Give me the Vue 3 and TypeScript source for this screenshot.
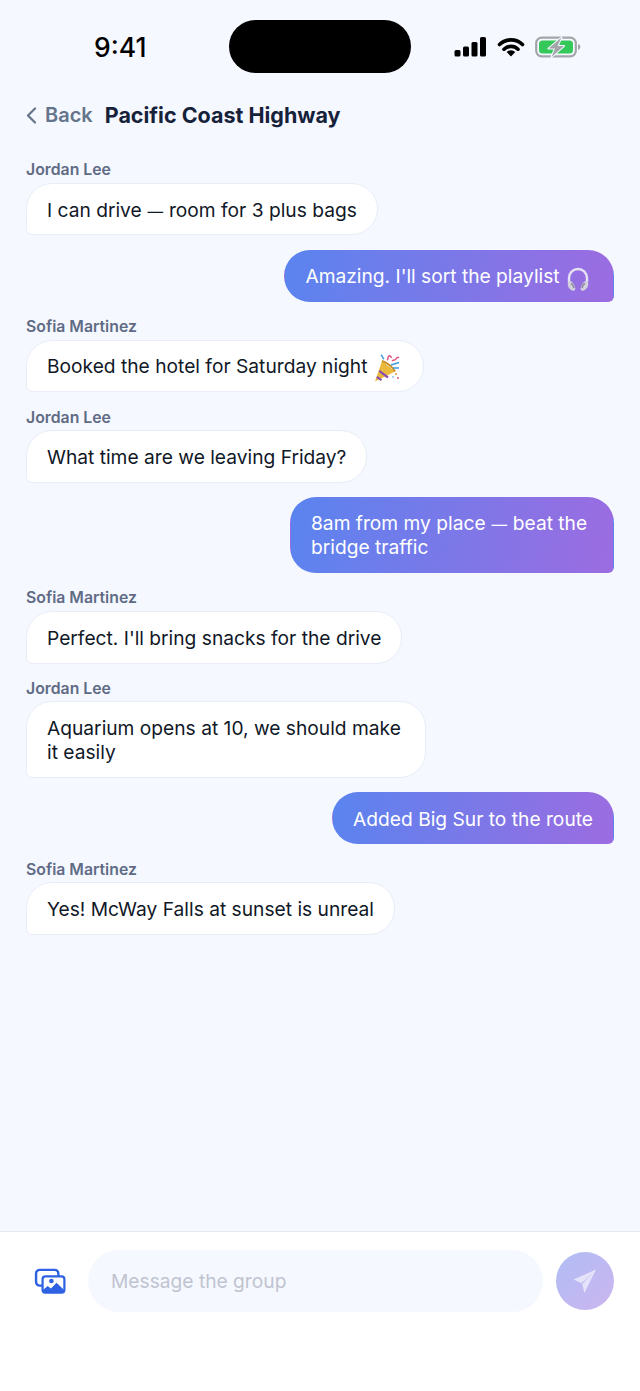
<script setup lang="ts">
interface Message {
  id: number
  sender?: string
  lines: string
  mine?: boolean
  emoji?: 'headphones' | 'party'
}

const messages: Message[] = [
  { id: 1, sender: 'Jordan Lee', lines: 'I can drive — room for 3 plus bags' },
  { id: 2, mine: true, lines: "Amazing. I'll sort the playlist", emoji: 'headphones' },
  { id: 3, sender: 'Sofia Martinez', lines: 'Booked the hotel for Saturday night', emoji: 'party' },
  { id: 4, sender: 'Jordan Lee', lines: 'What time are we leaving Friday?' },
  { id: 5, mine: true, lines: '8am from my place — beat the bridge traffic' },
  { id: 6, sender: 'Sofia Martinez', lines: "Perfect. I'll bring snacks for the drive" },
  { id: 7, sender: 'Jordan Lee', lines: 'Aquarium opens at 10, we should make it easily' },
  { id: 8, mine: true, lines: 'Added Big Sur to the route' },
  { id: 9, sender: 'Sofia Martinez', lines: 'Yes! McWay Falls at sunset is unreal' },
]

function beforeDash(text: string) {
  return text.split('—')[0]
}

function afterDash(text: string) {
  return text.split('—')[1]
}
</script>

<template>
  <div class="screen">
    <div class="statusbar">
      <span class="time">9:41</span>
      <div class="island"></div>
      <div class="status-icons">
        <svg width="33" height="21" viewBox="0 0 33 21">
          <rect x="0.5" y="14" width="6" height="6.5" rx="1.500" fill="#000" />
          <rect x="9" y="10.500" width="6" height="10" rx="1.500" fill="#000" />
          <rect x="17.500" y="6" width="6" height="14.500" rx="1.500" fill="#000" />
          <rect x="26" y="1" width="6" height="19.500" rx="1.500" fill="#000" />
        </svg>
        <svg width="28" height="21" viewBox="0 0 28 21">
          <path d="M2.500 8.500a16.500 16.500 0 0 1 23 0M7 13.200a10 10 0 0 1 14 0" fill="none" stroke="#000" stroke-width="3.600" stroke-linecap="round" />
          <path d="M14 20.500l-4.300-4.400a6 6 0 0 1 8.600 0z" fill="#000" />
        </svg>
        <svg width="46" height="22" viewBox="0 0 46 22">
          <rect x="1.200" y="1.700" width="39.600" height="18.600" rx="5.500" fill="none" stroke="#a3a6a8" stroke-width="2.200" />
          <rect x="4" y="4.500" width="34" height="13" rx="3.500" fill="#34c759" />
          <path d="M43 8v6c1.500-.4 2.400-1.600 2.400-3S44.500 8.400 43 8z" fill="#a3a6a8" />
          <path d="M26.500 1.500 13.500 12.500h6.500L16.500 21 29 10h-6.500z" fill="#a3a6a8" stroke="#f5f8ff" stroke-width="2" stroke-linejoin="round" paint-order="stroke" />
        </svg>
      </div>
    </div>

    <header class="navbar">
      <a class="back">
        <svg width="11" height="17" viewBox="0 0 11 17">
          <path d="M9 1.500 2 8.500l7 7" fill="none" stroke="#64748b" stroke-width="2.200" stroke-linecap="round" stroke-linejoin="round" />
        </svg>
        <span>Back</span>
      </a>
      <h1 class="title">Pacific Coast Highway</h1>
    </header>

    <main class="thread">
      <div v-for="m in messages" :key="m.id" class="msg" :class="{ mine: m.mine }">
        <div v-if="m.sender" class="sender">{{ m.sender }}</div>
        <div class="bubble" :class="{ 'has-emoji': m.emoji }">
          <template v-if="m.lines.includes('—')">{{ beforeDash(m.lines) }}<span class="dash">—</span>{{ afterDash(m.lines) }}</template>
          <template v-else>{{ m.lines }}</template>
          {{ ' ' }}
          <svg v-if="m.emoji === 'headphones'" class="emoji" width="24" height="25" viewBox="0 0 24 25">
            <path d="M3 15V11a9 9 0 0 1 18 0v4" fill="none" stroke="#e6e2f2" stroke-width="2.400" />
            <path d="M2.400 14.200c2.800-.9 5.200 1 6.900 6.800.4 1.700-.8 3-2.400 2.700C3.400 22.900.2 18 2.400 14.200z" fill="#d3d0de" />
            <path d="M21.600 14.200c-2.800-.9-5.200 1-6.900 6.800-.4 1.700.8 3 2.400 2.700 3.500-.8 6.700-5.700 4.500-9.500z" fill="#d3d0de" />
            <path d="M5 16.500c1.500.3 2.500 2 3 4.500M19 16.500c-1.500.3-2.500 2-3 4.500" fill="none" stroke="#8f8ba3" stroke-width="1.600" />
          </svg>
          <svg v-if="m.emoji === 'party'" class="emoji" width="26" height="28" viewBox="0 0 26 28">
            <path d="M1 27.500 8 7 21 17.500z" fill="#eab93c" />
            <path d="M8 7c3 .5 10.500 5.500 13 10.500" fill="none" stroke="#c98d22" stroke-width="2" />
            <path d="M5.200 16.800 14 23.500M2.800 22.800 7.500 26.200" stroke="#8a4fb0" stroke-width="2.200" />
            <path d="M10 5C8 4 9 2 7 1M17 11l8-2.500M19 14l6 0" stroke="#3f9be0" stroke-width="1.500" fill="none" />
            <path d="M13 6c2-1 0-3 2-4s1 2 3 1M18 7c2-2 3 0 4-2s2-1 3-2" stroke="#e0567f" stroke-width="1.500" fill="none" />
            <circle cx="22" cy="20" r="1" fill="#e0a030" />
            <circle cx="24" cy="24" r="1" fill="#e0567f" />
            <circle cx="19" cy="23" r="0.800" fill="#3f9be0" />
          </svg>
        </div>
      </div>
    </main>

    <footer class="composer">
      <svg class="gallery" width="32" height="26" viewBox="0 0 34 28">
        <rect x="2" y="2" width="24" height="17" rx="4" fill="none" stroke="#2f62e3" stroke-width="2.600" />
        <rect x="9" y="9" width="23.500" height="17.500" rx="3" fill="#fff" stroke="#2f62e3" stroke-width="2.400" />
        <circle cx="18.500" cy="14" r="2.500" fill="#2f62e3" />
        <path d="M9 24 14.500 19.500l3.500 2.500 6-6 8.500 8v1a2 2 0 0 1-2 2H11a2 2 0 0 1-2-2z" fill="#2f62e3" />
      </svg>
      <div class="input">Message the group</div>
      <button class="send">
        <svg width="26" height="26" viewBox="0 0 26 26">
          <path d="M23.500 2 2 11.500l7.500 3.500z" fill="#fff" fill-opacity="0.6" stroke="#fff" stroke-opacity="0.2" stroke-linejoin="round" />
          <path d="M23.500 2 10.500 16l2 8.500z" fill="#fff" fill-opacity="0.6" stroke="#fff" stroke-opacity="0.2" stroke-linejoin="round" />
        </svg>
      </button>
    </footer>
  </div>
</template>

<style scoped>
.screen {
  display: flex;
  flex-direction: column;
  height: 1391px;
  background: #f5f8ff;
  font-family: Inter, "Liberation Sans", sans-serif;
  color: #0f172a;
  overflow: hidden;
}

.statusbar {
  display: flex;
  align-items: center;
  height: 53px;
  margin-top: 20px;
  padding: 0 59px 0 94px;
}

.time {
  width: 135px;
  font-size: 26.500px;
  font-weight: 500;
  color: #000;
}

.island {
  width: 182px;
  height: 53px;
  border-radius: 27px;
  background: #000;
}

.status-icons {
  display: flex;
  align-items: center;
  gap: 10px;
  margin-left: auto;
}

.navbar {
  display: flex;
  align-items: center;
  gap: 12px;
  height: 28px;
  margin-top: 28px;
  padding: 0 26px;
}

.back {
  display: flex;
  align-items: center;
  gap: 8px;
  font-size: 20px;
  font-weight: 600;
  color: #64748b;
}

.title {
  margin: 0;
  font-size: 21.500px;
  font-weight: 700;
  color: #16213a;
}

.thread {
  flex: 1;
  display: flex;
  flex-direction: column;
  gap: 14.200px;
  padding: 30.400px 26px 0;
}

.msg {
  display: flex;
  flex-direction: column;
  align-items: flex-start;
}

.msg.mine {
  align-items: flex-end;
}

.sender {
  height: 19.200px;
  margin-bottom: 4.400px;
  font-size: 15.800px;
  font-weight: 600;
  line-height: 21.400px;
  color: #5f6b85;
}

.bubble {
  max-width: 400px;
  box-sizing: border-box;
  padding: 13.600px 20px 12.900px;
  border: 1px solid #e8edf7;
  border-radius: 26px 26px 26px 6px;
  background: #fff;
  font-size: 19.200px;
  line-height: 24px;
  color: #111827;
}

.bubble.has-emoji {
  max-width: none;
  white-space: nowrap;
}

.dash {
  margin: 0 0.4px;
  font-size: 15.600px;
  line-height: 0;
}

.mine .bubble {
  border-color: transparent;
  border-radius: 26px 26px 6px 26px;
  background: linear-gradient(100deg, #5a84ef, #9c6ce1);
  color: #fff;
}

.mine .bubble:not(.has-emoji) {
  max-width: 324px;
}

.emoji {
  margin: -4px 3px -4px 1px;
  vertical-align: -4.500px;
}

.composer {
  display: flex;
  align-items: flex-start;
  height: 160px;
  box-sizing: border-box;
  padding: 18px 26px 0 34px;
  border-top: 1px solid #e5e9f2;
  background: #fff;
}

.gallery {
  flex: none;
  margin: 18px 2px 0 0;
}

.input {
  flex: 1;
  height: 62px;
  margin-left: 20px;
  padding-left: 23px;
  border-radius: 31px;
  background: #f5f8ff;
  font-size: 19.200px;
  line-height: 62px;
  color: #c0c4d0;
}

.send {
  flex: none;
  display: flex;
  align-items: center;
  justify-content: center;
  width: 58px;
  height: 58px;
  margin: 2px 0 0 13px;
  padding: 0;
  border: none;
  border-radius: 50%;
  background: linear-gradient(135deg, #b0bdf5, #ccb5ef);
}
</style>
